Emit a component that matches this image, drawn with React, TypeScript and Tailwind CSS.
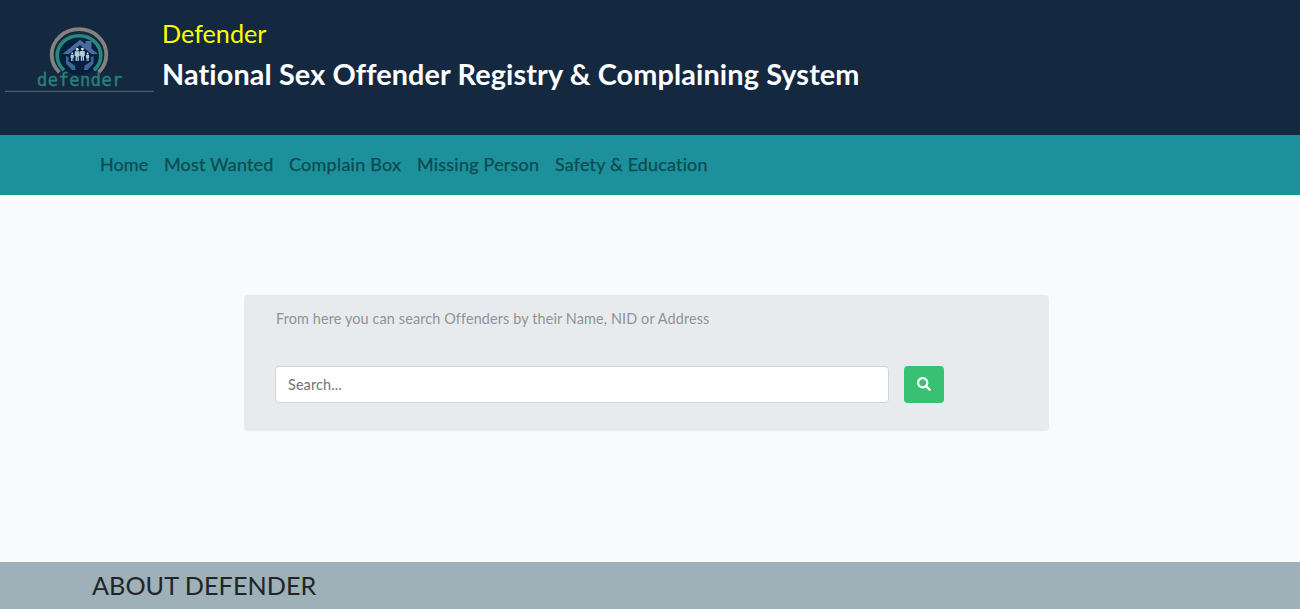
import { FaSearch } from "react-icons/fa";

const links = [
  { label: "Home", box: "w-[48px] tracking-[0.1px]" },
  { label: "Most Wanted", box: "w-[109px] tracking-[0.16px]" },
  { label: "Complain Box", box: "w-[112px] tracking-[0.24px]" },
  { label: "Missing Person", box: "w-[122px] tracking-[0.22px]" },
  { label: "Safety & Education", box: "w-[153px] tracking-[0.16px]" },
];

function Person({ x, y, s }: { x: number; y: number; s: number }) {
  return (
    <g transform={`translate(${x} ${y}) scale(${s})`}>
      <circle cx="0" cy="1.4" r="1.4" fill="#e8eaec" />
      <path d="M-2.3 3.3H2.3L2.6 8H1.6V13H.3V9H-.3V13H-1.6V8H-2.6Z" fill="#b5c8dc" />
    </g>
  );
}

function Logo() {
  return (
    <svg className="block h-[100px] w-[160px]" viewBox="0 10 160 100" aria-label="Defender">
      <ellipse cx="79" cy="56" rx="20.5" ry="19" fill="#03213e" />
      <path d="M59.4 72.4A27.3 25.5 0 1 1 98.6 72.4" fill="none" stroke="#85817f" strokeWidth="3.8" />
      <path d="M64 70.2A21.8 20 0 1 1 94 70.2" fill="none" stroke="#28877b" strokeWidth="3.6" />
      <path d="M62.5 54L80 39.7L85.5 44V41H91.5V48.5L98 54H91.5L80 45L69 54Z" fill="#466d9b" />
      <path d="M66 56L68.5 57V61.5L74.8 65.5L75.5 70H72L66 63.5Z" fill="#3f6693" />
      <path d="M93.5 56L91 57V61.5L84.7 65.5L84 70H87.5L93.5 63.5Z" fill="#3f6693" />
      <Person x={77.2} y={48} s={1} />
      <Person x={82.4} y={47.7} s={1} />
      <Person x={72.2} y={52.5} s={0.65} />
      <Person x={87.6} y={52.5} s={0.65} />
      <text
        x="37"
        y="86.3"
        textLength="85.5"
        lengthAdjust="spacing"
        className="fill-[#28817b] stroke-[#28817b] stroke-[0.4px] font-['DejaVu_Sans_Mono',monospace] text-[17px]"
      >
        defender
      </text>
      <path d="M5 91.4H154" stroke="#4b5b71" strokeWidth="1.1" />
    </svg>
  );
}

export default function App() {
  return (
    <div className="flex h-[609px] flex-col overflow-hidden bg-[#f8fafc] font-['Lato',sans-serif]">
      <header className="flex h-[135px] shrink-0 bg-[#14293f] pt-[10px]">
        <Logo />
        <div className="pt-[8px] pl-[2px] whitespace-nowrap">
          <div className="text-[25.2px] leading-[30px] text-[#ffff00]">
            <span>Defender</span>
          </div>
          <h1 className="mt-[9px] text-[28.8px] leading-[34px] font-bold tracking-[0.13px] text-white">
            <span>National Sex Offender Registry &amp; Complaining System</span>
          </h1>
        </div>
      </header>
      <nav className="flex h-[60px] shrink-0 items-center gap-4 bg-[#1c919b] pb-px pl-[100px] text-[18px] text-[#0e4a50] [-webkit-text-stroke:0.25px]">
        {links.map((l) => (
          <a key={l.label} className={`whitespace-nowrap ${l.box}`}>
            <span>{l.label}</span>
          </a>
        ))}
      </nav>
      <main className="flex-1 pt-[100px] pl-[244px]">
        <section className="h-[136px] w-[805px] rounded bg-[#e8ebee] pt-3 pl-[31px]">
          <p className="pl-px text-[14.4px] leading-[23px] tracking-[0.13px] whitespace-nowrap text-[#929294]">
            <span>From here you can search Offenders by their Name, NID or Address</span>
          </p>
          <form className="mt-9 flex gap-[15px]">
            <div className="flex h-[37px] w-[614px] items-center rounded border border-[#ced4da] bg-white px-3 text-[14.4px] tracking-[0.13px] text-[#6c757d]">
              <span>Search...</span>
            </div>
            <button type="button" className="flex h-[37px] w-10 items-center justify-center rounded bg-[#38c172] pb-px text-white" aria-label="Search">
              <FaSearch size={14} />
            </button>
          </form>
        </section>
      </main>
      <footer className="h-[47px] shrink-0 bg-[#9eb1b8] pt-[8px] pl-[92px] text-[25.2px] leading-[30px] tracking-[0.04px] whitespace-nowrap text-[#212529]">
        <span>ABOUT DEFENDER</span>
      </footer>
    </div>
  );
}
